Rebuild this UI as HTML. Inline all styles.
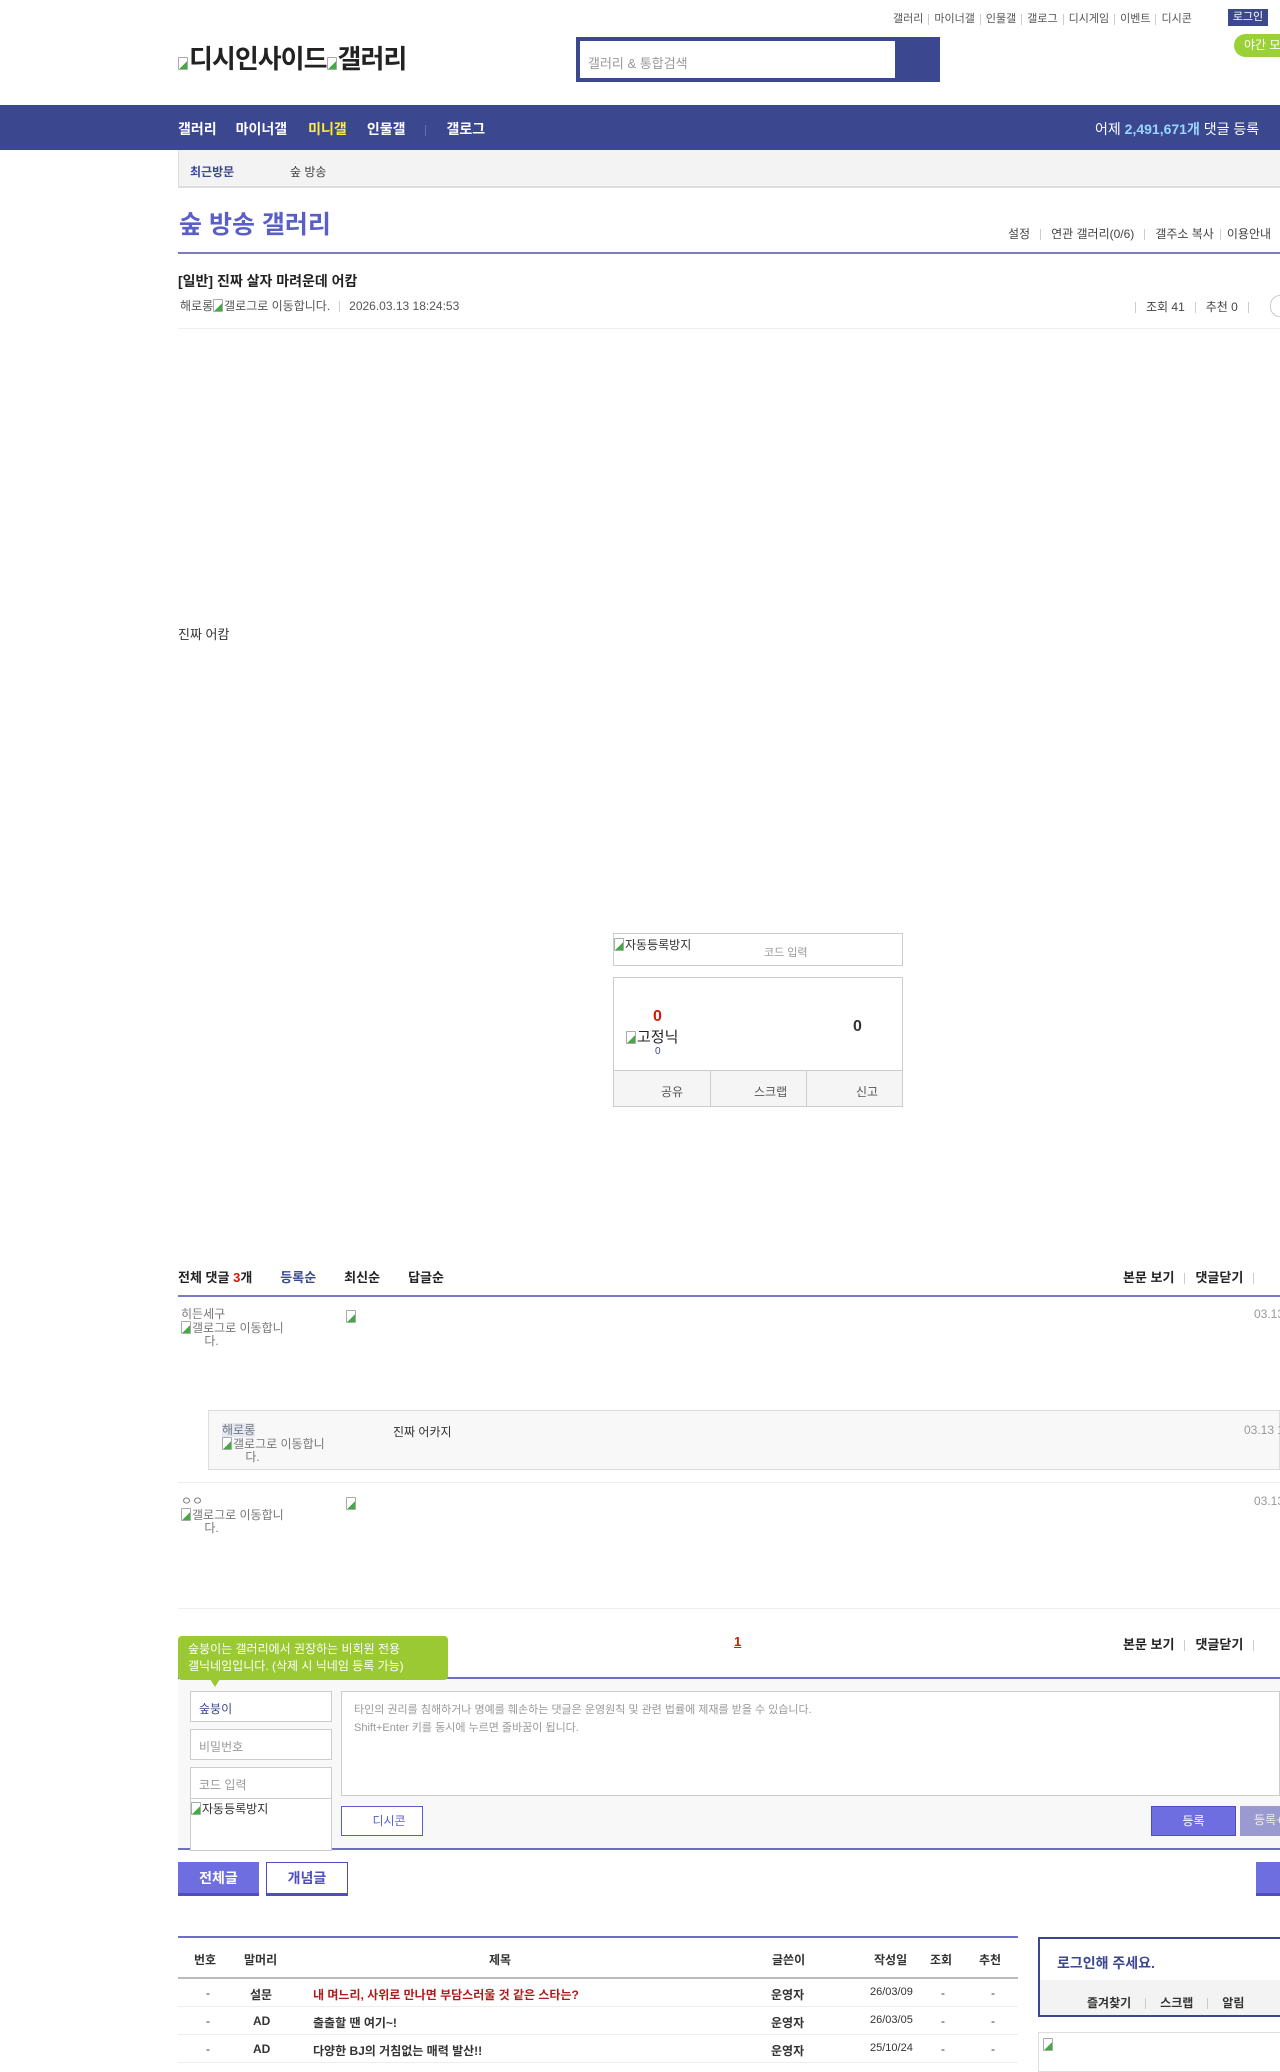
<!DOCTYPE html>
<html><head><meta charset="utf-8">
<style>
*{margin:0;padding:0;box-sizing:border-box}
body{width:1280px;height:2068px;position:relative;overflow:hidden;background:#fff;font-family:"Liberation Sans","Noto Sans CJK KR",sans-serif;color:#333;font-size:13px}
.a{position:absolute;white-space:nowrap}
.sep{display:inline-block;width:1px;height:11px;background:#ccc;margin:0 6px;vertical-align:middle}
.br{display:inline-block;width:10px;height:13px;border:1px solid #aaa;border-radius:1px;vertical-align:-2px;margin-right:1px;background:linear-gradient(135deg,#fff 60%,#4a4 60%)}
</style></head><body>
<!-- top links -->
<div class="a" style="top:10px;left:893px;font-size:11px;color:#555">갤러리<span class="sep" style="margin:0 5px"></span>마이너갤<span class="sep" style="margin:0 5px"></span>인물갤<span class="sep" style="margin:0 5px"></span>갤로그<span class="sep" style="margin:0 5px"></span>디시게임<span class="sep" style="margin:0 5px"></span>이벤트<span class="sep" style="margin:0 5px"></span>디시콘</div>
<div class="a" style="top:9px;left:1228px;width:40px;height:17px;background:#3b4890;color:#fff;font-size:11px;text-align:center;line-height:17px">로그인</div>
<div class="a" style="top:34px;left:1234px;width:60px;height:23px;background:#9ad136;color:#fff;font-size:12px;border-radius:12px;padding-left:10px;line-height:23px">야간 모드</div>
<div class="a" style="top:39px;left:178px;font-size:26px;color:#222;font-weight:bold;letter-spacing:-1px"><span class="br"></span>디시인사이드<span class="br"></span>갤러리</div>
<div class="a" style="top:37px;left:576px;width:364px;height:45px;background:#3b4890"></div>
<div class="a" style="top:41px;left:580px;width:315px;height:37px;background:#fff;color:#999;font-size:13px;padding:12px 8px">갤러리 &amp; 통합검색</div>
<!-- nav -->
<div class="a" style="top:105px;left:0;width:1280px;height:45px;background:#3b4890"></div>
<div class="a" style="top:119px;left:178px;font-size:14px;font-weight:bold;color:#fff">갤러리<span style="margin-left:19px">마이너갤</span><span style="margin-left:21px;color:#ffed3b">미니갤</span><span style="margin-left:20px">인물갤</span><span class="sep" style="margin:0 20px;background:#6570aa"></span>갤로그</div>
<div class="a" style="top:119px;left:1095px;font-size:14px;color:#fff">어제 <b style="color:#9ad5ff">2,491,671개</b> 댓글 등록</div>
<div class="a" style="top:150px;left:178px;width:1102px;height:38px;background:#f3f3f3;border-bottom:2px solid #ddd;border-left:1px solid #ddd"></div>
<div class="a" style="top:163px;left:190px;font-size:12px;color:#3b4890;font-weight:bold">최근방문</div>
<div class="a" style="top:163px;left:290px;font-size:12px;color:#444">숲 방송</div>
<!-- title -->
<div class="a" style="top:205px;left:179px;font-size:25px;color:#5a5fc8;font-weight:bold">숲 방송 갤러리</div>
<div class="a" style="top:225px;left:1008px;font-size:12px;color:#444">설정<span class="sep" style="margin:0 10px"></span>연관 갤러리(0/6)<span class="sep" style="margin:0 10px"></span>갤주소 복사<span class="sep"></span>이용안내</div>
<div class="a" style="top:252px;left:178px;width:1102px;height:2px;background:#7b7bc3"></div>
<div class="a" style="top:271px;left:178px;font-size:14px;font-weight:bold;color:#222">[일반] 진짜 살자 마려운데 어캄</div>
<div class="a" style="top:297px;left:180px;font-size:12px;color:#555">해로롱<span class="br"></span>갤로그로 이동합니다.<span class="sep" style="margin:0 9px"></span>2026.03.13 18:24:53</div>
<div class="a" style="top:298px;left:1135px;font-size:12px;color:#444"><span class="sep" style="margin:0 10px 0 0"></span>조회 41<span class="sep" style="margin:0 10px"></span>추천 0<span class="sep" style="margin:0 10px"></span></div>
<div class="a" style="top:295px;left:1270px;width:20px;height:22px;border:1px solid #ccc;border-radius:10px"></div>
<div class="a" style="top:328px;left:178px;width:1102px;height:1px;background:#eee"></div>
<div class="a" style="top:624px;left:178px;font-size:13px;color:#333">진짜 어캄</div>
<!-- captcha & recommend -->
<div class="a" style="top:933px;left:613px;width:290px;height:33px;border:1px solid #ccc"></div>
<div class="a" style="top:936px;left:614px;font-size:12px;color:#333"><span class="br"></span>자동등록방지</div>
<div class="a" style="top:944px;left:764px;font-size:11px;color:#999">코드 입력</div>
<div class="a" style="top:977px;left:613px;width:290px;height:130px;border:1px solid #ccc"></div>
<div class="a" style="top:1070px;left:613px;width:290px;height:37px;border:1px solid #ccc;background:#f5f5f5"></div>
<div class="a" style="top:1070px;left:710px;width:1px;height:37px;background:#ccc"></div>
<div class="a" style="top:1070px;left:806px;width:1px;height:37px;background:#ccc"></div>
<div class="a" style="top:1083px;left:661px;font-size:12px;color:#555">공유</div>
<div class="a" style="top:1083px;left:754px;font-size:12px;color:#555">스크랩</div>
<div class="a" style="top:1083px;left:856px;font-size:12px;color:#555">신고</div>
<div class="a" style="top:1008px;left:653px;font-size:16px;font-weight:bold;color:#d31900">0</div>
<div class="a" style="top:1026px;left:626px;font-size:15px;color:#222"><span class="br"></span>고정닉</div>
<div class="a" style="top:1046px;left:655px;font-size:10px;color:#3b4890">0</div>
<div class="a" style="top:1018px;left:853px;font-size:16px;font-weight:bold;color:#333">0</div>
<!-- comments -->
<div class="a" style="top:1267px;left:178px;font-size:13px;font-weight:bold;color:#222">전체 댓글 <span style="color:#d31900">3</span>개<span style="margin-left:28px;color:#3b4890">등록순</span><span style="margin-left:28px">최신순</span><span style="margin-left:28px">답글순</span></div>
<div class="a" style="top:1267px;left:1123px;font-size:13px;font-weight:bold;color:#222">본문 보기<span class="sep" style="margin:0 10px"></span>댓글닫기<span class="sep" style="margin:0 10px"></span></div>
<div class="a" style="top:1295px;left:178px;width:1102px;height:2px;background:#7b7bc3"></div>
<div class="a" style="top:1308px;left:181px;font-size:12px;color:#777;line-height:13px;white-space:normal;width:130px">히든세구<br><span class="br"></span>갤로그로 이동합니<br>&nbsp;&nbsp;&nbsp;&nbsp;&nbsp;&nbsp;&nbsp;다.</div>
<div class="a" style="top:1309px;left:346px"><span class="br"></span></div>
<div class="a" style="top:1307px;left:1254px;font-size:12px;color:#999">03.13</div>
<div class="a" style="top:1410px;left:208px;width:1072px;height:60px;background:#f8f8f8;border:1px solid #ddd"></div>
<div class="a" style="top:1424px;left:222px;font-size:12px;color:#777;line-height:13px"><span style="background:#e4e7f5">해로롱</span><br><span class="br"></span>갤로그로 이동합니<br>&nbsp;&nbsp;&nbsp;&nbsp;&nbsp;&nbsp;&nbsp;다.</div>
<div class="a" style="top:1423px;left:393px;font-size:12px;color:#333">진짜 어카지</div>
<div class="a" style="top:1423px;left:1244px;font-size:12px;color:#999">03.13 1</div>
<div class="a" style="top:1482px;left:178px;width:1102px;height:1px;background:#eee"></div>
<div class="a" style="top:1495px;left:181px;font-size:12px;color:#777;line-height:13px">ㅇㅇ<br><span class="br"></span>갤로그로 이동합니<br>&nbsp;&nbsp;&nbsp;&nbsp;&nbsp;&nbsp;&nbsp;다.</div>
<div class="a" style="top:1496px;left:346px"><span class="br"></span></div>
<div class="a" style="top:1494px;left:1254px;font-size:12px;color:#999">03.13</div>
<div class="a" style="top:1608px;left:178px;width:1102px;height:1px;background:#eee"></div>
<div class="a" style="top:1634px;left:734px;font-size:13px;font-weight:bold;color:#d31900;text-decoration:underline">1</div>
<div class="a" style="top:1634px;left:1123px;font-size:13px;font-weight:bold;color:#222">본문 보기<span class="sep" style="margin:0 10px"></span>댓글닫기<span class="sep" style="margin:0 10px"></span></div>
<!-- write -->
<div class="a" style="top:1677px;left:178px;width:1102px;height:173px;background:#f8f8f8;border-top:2px solid #6e6ec8;border-bottom:2px solid #6e6ec8"></div>
<div class="a" style="top:1636px;left:178px;width:270px;height:44px;background:#9ac933;border-radius:4px;color:#fff;font-size:12px;line-height:17px;padding:5px 10px">숲붕이는 갤러리에서 권장하는 비회원 전용<br>갤닉네임입니다. (삭제 시 닉네임 등록 가능)</div>
<div class="a" style="top:1679px;left:210px;border-left:5px solid transparent;border-right:5px solid transparent;border-top:8px solid #9ac933"></div>
<div class="a" style="top:1691px;left:190px;width:142px;height:31px;border:1px solid #ccc;background:#fff;font-size:12px;color:#3b4890;padding:8px">숲붕이</div>
<div class="a" style="top:1729px;left:190px;width:142px;height:31px;border:1px solid #ccc;background:#fff;font-size:12px;color:#999;padding:8px">비밀번호</div>
<div class="a" style="top:1767px;left:190px;width:142px;height:84px;border:1px solid #ccc;background:#fff;font-size:12px;color:#999;padding:8px">코드 입력</div>
<div class="a" style="top:1798px;left:191px;width:140px;height:1px;background:#ccc"></div>
<div class="a" style="top:1800px;left:191px;font-size:12px;color:#333"><span class="br"></span>자동등록방지</div>
<div class="a" style="top:1691px;left:341px;width:939px;height:105px;border:1px solid #ccc;background:#fff;font-size:11px;color:#999;line-height:18px;padding:9px 12px">타인의 권리를 침해하거나 명예를 훼손하는 댓글은 운영원칙 및 관련 법률에 제재를 받을 수 있습니다.<br>Shift+Enter 키를 동시에 누르면 줄바꿈이 됩니다.</div>
<div class="a" style="top:1806px;left:341px;width:82px;height:30px;border:1px solid #5a5fc8;background:#fff;color:#5a5fc8;font-size:12px;text-align:center;line-height:28px;padding-left:14px">디시콘</div>
<div class="a" style="top:1806px;left:1151px;width:85px;height:30px;background:#6e6ee0;border:1px solid #4e4ec0;color:#fff;font-size:12px;text-align:center;line-height:28px">등록</div>
<div class="a" style="top:1806px;left:1240px;width:85px;height:30px;background:#9a9ad0;color:#eee;font-size:12px;line-height:28px;padding-left:14px">등록+추천</div>
<div class="a" style="top:1862px;left:178px;width:81px;height:34px;background:#6e6ee0;border-bottom:3px solid #4e4ec0;color:#fff;font-size:14px;font-weight:bold;text-align:center;line-height:32px">전체글</div>
<div class="a" style="top:1862px;left:266px;width:82px;height:34px;background:#fff;border:1px solid #4e4ec0;border-bottom:3px solid #4e4ec0;color:#4e4ec0;font-size:14px;font-weight:bold;text-align:center;line-height:30px">개념글</div>
<div class="a" style="top:1862px;left:1256px;width:60px;height:34px;background:#6e6ee0;border-bottom:3px solid #4e4ec0"></div>
<!-- list -->
<div class="a" style="top:1936px;left:178px;width:840px;height:2px;background:#6e6ec8"></div>
<div class="a" style="top:1951px;left:178px;width:840px;font-size:12px;font-weight:bold;color:#333">
<span class="a" style="left:16px">번호</span><span class="a" style="left:66px">말머리</span><span class="a" style="left:311px">제목</span><span class="a" style="left:594px">글쓴이</span><span class="a" style="left:696px">작성일</span><span class="a" style="left:752px">조회</span><span class="a" style="left:801px">추천</span></div>
<div class="a" style="top:1977px;left:178px;width:840px;height:2px;background:#bbb"></div>
<div class="a" style="top:1986px;left:178px;width:840px;font-size:12px;color:#333">
<span class="a" style="left:28px">-</span><span class="a" style="left:72px;font-weight:bold">설문</span><span class="a" style="left:135px;font-weight:bold;color:#b01a1a">내 며느리, 사위로 만나면 부담스러울 것 같은 스타는?</span><span class="a" style="left:593px;font-weight:bold">운영자</span><span class="a" style="left:692px;font-size:11px">26/03/09</span><span class="a" style="left:763px">-</span><span class="a" style="left:813px">-</span></div>
<div class="a" style="top:2006px;left:178px;width:840px;height:1px;background:#eee"></div>
<div class="a" style="top:2014px;left:178px;width:840px;font-size:12px;color:#333">
<span class="a" style="left:28px">-</span><span class="a" style="left:75px;font-weight:bold">AD</span><span class="a" style="left:135px;font-weight:bold">출출할 땐 여기~!</span><span class="a" style="left:593px;font-weight:bold">운영자</span><span class="a" style="left:692px;font-size:11px">26/03/05</span><span class="a" style="left:763px">-</span><span class="a" style="left:813px">-</span></div>
<div class="a" style="top:2034px;left:178px;width:840px;height:1px;background:#eee"></div>
<div class="a" style="top:2042px;left:178px;width:840px;font-size:12px;color:#333">
<span class="a" style="left:28px">-</span><span class="a" style="left:75px;font-weight:bold">AD</span><span class="a" style="left:135px;font-weight:bold">다양한 BJ의 거침없는 매력 발산!!</span><span class="a" style="left:593px;font-weight:bold">운영자</span><span class="a" style="left:692px;font-size:11px">25/10/24</span><span class="a" style="left:763px">-</span><span class="a" style="left:813px">-</span></div>
<div class="a" style="top:2062px;left:178px;width:840px;height:1px;background:#eee"></div>
<div class="a" style="top:1937px;left:1038px;width:250px;height:80px;border:2px solid #3b4890"></div>
<div class="a" style="top:1953px;left:1057px;font-size:14px;font-weight:bold;color:#3b4890">로그인해 주세요.</div>
<div class="a" style="top:1980px;left:1040px;width:240px;height:35px;background:#f3f3f3"></div>
<div class="a" style="top:1994px;left:1087px;font-size:12px;font-weight:bold;color:#333">즐겨찾기<span class="sep" style="margin:0 14px"></span>스크랩<span class="sep" style="margin:0 14px"></span>알림</div>
<div class="a" style="top:2032px;left:1038px;width:250px;height:40px;border:1px solid #ddd;padding:4px"><span class="br"></span></div>
</body></html>
